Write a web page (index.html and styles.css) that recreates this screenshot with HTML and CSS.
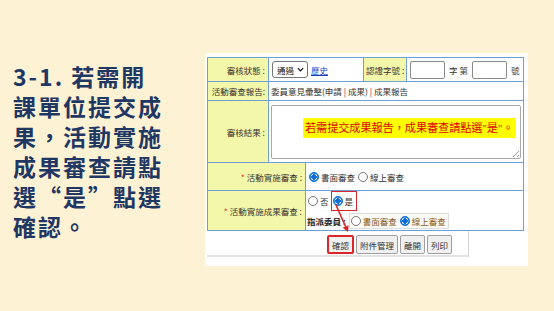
FILE: index.html
```html
<!DOCTYPE html>
<html lang="zh-Hant">
<head>
<meta charset="utf-8">
<link rel="stylesheet" href="styles.css">
</head>
<body>
<div class="page">
  <div class="intro">3-1. 若需開<br>課單位提交成<br>果，活動實施<br>成果審查請點<br>選“是”點選<br>確認。</div>
  <div class="panel">
    <table class="grid grid-a">
      <colgroup><col class="c1"><col class="c2"><col class="c3"><col></colgroup>
      <tr class="r1">
        <td class="lbl">審核狀態 :</td>
        <td class="val"><span class="sel">通過<svg class="chev" viewBox="0 0 8 5" width="7" height="5"><path d="M1 1 L4 4 L7 1" fill="none" stroke="#111" stroke-width="1.4"/></svg></span><a class="link" href="#">歷史</a></td>
        <td class="lbl">認證字號 :</td>
        <td class="val"><span class="inp"></span><span class="txt">字 第</span><span class="inp"></span><span class="txt">號</span></td>
      </tr>
      <tr class="r2">
        <td class="lbl">活動審查報告:</td>
        <td class="val" colspan="3">委員意見彙整(申請 | 成果) | 成果報告</td>
      </tr>
      <tr class="r3">
        <td class="lbl">審核結果 :</td>
        <td class="val" colspan="3">
          <div class="area"><span class="note">若需提交成果報告，成果審查請點選"是"。</span><span class="grip"></span></div>
        </td>
      </tr>
    </table>
    <table class="grid grid-b">
      <colgroup><col class="d1"><col></colgroup>
      <tr class="r4">
        <td class="lbl"><span class="req">*</span> 活動實施審查 :</td>
        <td class="val"><div class="opts"><span class="radio on"></span><span>書面審查</span><span class="radio"></span><span>線上審查</span></div></td>
      </tr>
      <tr class="r5">
        <td class="lbl"><span class="req">*</span> 活動實施成果審查 :</td>
        <td class="val">
          <div class="opts"><span class="radio"></span><span>否</span><span class="mark"><span class="radio on"></span><span>是</span></span></div>
          <div class="opts assign"><b>指派委員 :</b><span class="box"><span class="radio"></span><span class="brown">書面審查</span><span class="radio on"></span><span class="brown">線上審查</span></span></div>
        </td>
      </tr>
    </table>
    <div class="actions">
      <span class="btn btn-ok">確認</span><span class="btn">附件管理</span><span class="btn">離開</span><span class="btn">列印</span>
    </div>
    <svg class="arrow" viewBox="0 0 30 35" width="30" height="35">
      <line x1="11" y1="4" x2="20.8" y2="26" stroke="#d9262b" stroke-width="1.6"/>
      <polygon points="23,31 23.6,24.2 17.7,26.8" fill="#d9262b"/>
    </svg>
  </div>
</div>
</body>
</html>
```
FILE: styles.css
```css
html, body {
  margin: 0;
  padding: 0;
}
body {
  background: #fef2d5;
  width: 554px;
  height: 311px;
  overflow: hidden;
}
.page {
  display: flex;
  align-items: flex-start;
}
.intro {
  margin: 61px 0 0 13px;
  width: 192px;
  font-family: "Noto Sans CJK TC", sans-serif;
  font-weight: bold;
  font-size: 23px;
  line-height: 30px;
  letter-spacing: 2px;
  color: #1f3763;
}
.panel {
  position: relative;
  margin-top: 53px;
  width: 323px;
  height: 213px;
  background: #fff;
  padding: 4px 4px 0 2px;
  box-sizing: border-box;
  font-family: "Noto Sans CJK TC", sans-serif;
  font-size: 8.5px;
  color: #333;
}
.grid {
  width: 317px;
  border-collapse: collapse;
  table-layout: fixed;
}
.grid td {
  border: 1px solid #6f9fd6;
  padding: 0 2px;
  white-space: nowrap;
  overflow: hidden;
}
.grid .lbl {
  background: #f3f7aa;
  text-align: right;
  padding-right: 3px;
}
.c1 { width: 61px; }
.c2 { width: 95px; }
.c3 { width: 43px; }
.d1 { width: 98px; }
.r1 td { height: 23px; }
.r2 td { height: 18px; }
.r3 td { height: 57px; }
.r4 td { height: 27px; }
.r5 td { height: 39px; }
.grid-b { margin-top: -1px; }
.r1 .val, .r1 .val > * { vertical-align: middle; }
.sel {
  display: inline-flex;
  align-items: center;
  justify-content: space-between;
  box-sizing: border-box;
  width: 36px;
  height: 17px;
  border: 1px solid #767676;
  border-radius: 3px;
  padding: 0 3px 0 4px;
  margin-left: 1px;
  color: #111;
}
.link {
  color: #1a3fc6;
  text-decoration: underline;
  margin-left: 3px;
}
.inp {
  display: inline-block;
  box-sizing: border-box;
  width: 35px;
  height: 18px;
  border: 1px solid #8a8a8a;
  border-radius: 2px;
  margin-left: 1px;
}
.txt { margin: 0 3px 0 4px; }
.r3 .val { padding: 2px; }
.area {
  position: relative;
  box-sizing: border-box;
  height: 54px;
  border: 1px solid #a9a9a9;
  border-radius: 2px;
  padding: 12px 0 0 31px;
}
.note {
  display: inline-block;
  background: #ffff00;
  color: #e00000;
  font-family: "Liberation Serif", "Noto Sans CJK TC", serif;
  font-size: 11.2px;
  line-height: 20px;
  padding: 0 2px;
  letter-spacing: -0.1px;
}
.grip {
  position: absolute;
  right: 1px;
  bottom: 1px;
  width: 6px;
  height: 6px;
  background: linear-gradient(135deg, transparent 45%, #999 45%, #999 55%, transparent 55%, transparent 75%, #999 75%, #999 85%, transparent 85%);
}
.req { color: #e8403a; }
.opts {
  display: flex;
  align-items: center;
  gap: 2px;
}
.r4 .val { padding-left: 2px; }
.r5 .val { padding-left: 1px; }
.radio {
  display: inline-block;
  box-sizing: border-box;
  width: 10px;
  height: 10px;
  border-radius: 50%;
  border: 1px solid #777;
  background: #fff;
  margin-left: 1px;
}
.radio.on {
  border: 1px solid #0b6fd8;
  background: radial-gradient(circle, #0b6fd8 0 2.6px, #fff 2.9px 3.4px, #0b6fd8 3.6px);
}
.mark {
  display: inline-flex;
  align-items: center;
  gap: 2px;
  border: 1.5px solid #d9262b;
  padding: 3px 3px 3px 0;
  margin-left: 0;
}
.r5 .opts:first-child { margin-top: -2px; }
.assign { margin-top: 2px; }
.assign b { color: #222; font-weight: bold; }
.box {
  display: inline-flex;
  align-items: center;
  gap: 2px;
  border: 1px solid #ddd;
  background: #fbfaf5;
  padding: 1px 2px 1px 0;
  margin-left: 1px;
}
.brown { color: #8a5a22; }
.actions {
  display: flex;
  justify-content: flex-end;
  align-items: center;
  gap: 2px;
  width: 262px;
  height: 26px;
  box-sizing: border-box;
  padding: 3px 16px 0 0;
  border-right: 1px solid #d8d8d8;
  border-bottom: 2px solid #e2e2e2;
}
.btn {
  display: inline-flex;
  align-items: center;
  justify-content: center;
  box-sizing: border-box;
  height: 19px;
  padding: 0 3px;
  border: 1px solid #9f9f9f;
  border-radius: 2px;
  background: #f0f0f0;
  color: #333;
  white-space: nowrap;
}
.btn-ok {
  border: 2px solid #d9262b;
  padding: 0 3px;
}
.arrow {
  position: absolute;
  left: 120px;
  top: 148px;
}
```
